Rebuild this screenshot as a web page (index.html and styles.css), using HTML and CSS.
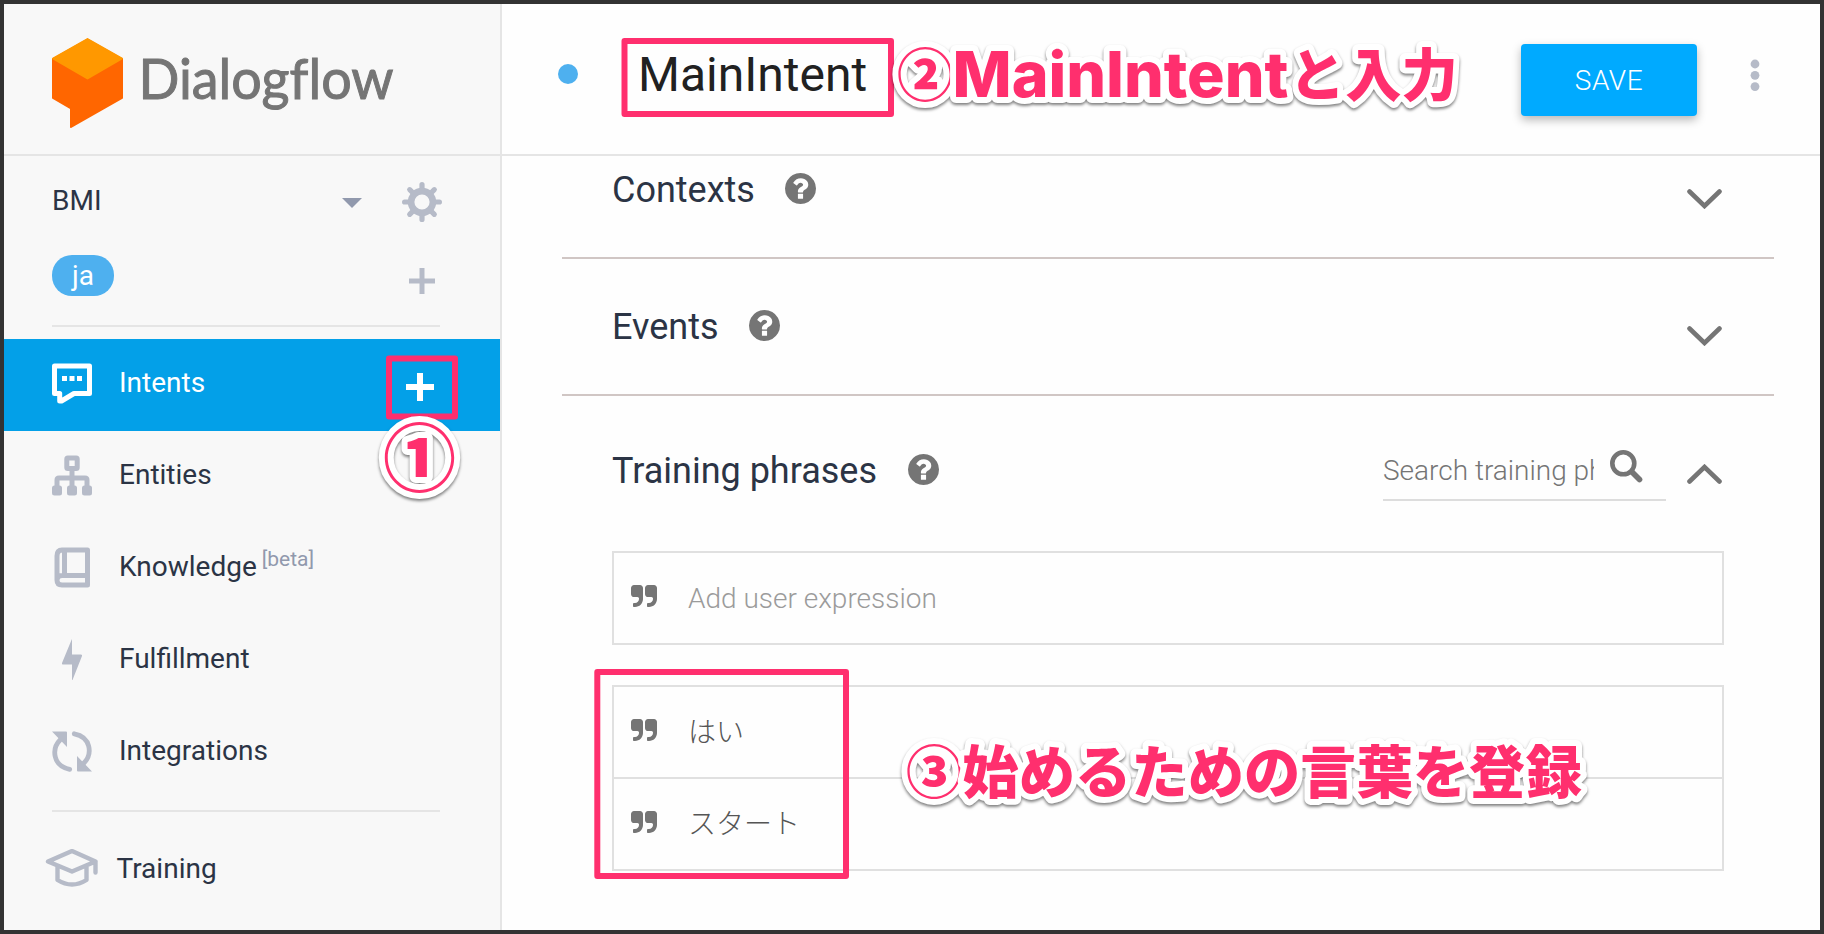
FILE: index.html
```html
<!DOCTYPE html>
<html lang="ja">
<head>
<meta charset="utf-8">
<title>Dialogflow</title>
<link rel="stylesheet" href="styles.css">
</head>
<body>
<svg class="defs" width="0" height="0">
  <symbol id="help" viewBox="128 128 1536 1536"><path d="M1024 1376v-192q0-14-9-23t-23-9h-192q-14 0-23 9t-9 23v192q0 14 9 23t23 9h192q14 0 23-9t9-23zm256-672q0-88-55.5-163t-138.500-116-170-41q-243 0-371 213-15 24 8 42l132 100q7 6 19 6 16 0 25-12 53-68 86-92 34-24 86-24 48 0 85.500 26t37.500 59q0 38-20 61t-68 45q-63 28-115.500 86.500t-52.500 125.500v36q0 14 9 23t23 9h192q14 0 23-9t9-23q0-19 21.500-49.500t54.500-49.500q32-18 49-28.500t46-35 44.500-48 28-60.500 12.500-81zm384 192q0 209-103 385.500t-279.500 279.500-385.500 103-385.500-103-279.500-279.500-103-385.500 103-385.500 279.500-279.500 385.500-103 385.500 103 279.500 279.500 103 385.500z"/></symbol>
  <symbol id="quote" viewBox="0 128 1664 1408"><path d="M768 320v704q0 104-40.500 198.500t-109.500 163.500-163.500 109.500-198.500 40.500h-64q-26 0-45-19t-19-45v-128q0-26 19-45t45-19h64q106 0 181-75t75-181v-32q0-40-28-68t-68-28h-224q-80 0-136-56t-56-136v-384q0-80 56-136t136-56h384q80 0 136 56t56 136zM1664 320v704q0 104-40.500 198.500t-109.500 163.500-163.500 109.500-198.500 40.500h-64q-26 0-45-19t-19-45v-128q0-26 19-45t45-19h64q106 0 181-75t75-181v-32q0-40-28-68t-68-28h-224q-80 0-136-56t-56-136v-384q0-80 56-136t136-56h384q80 0 136 56t56 136z"/></symbol>
  <symbol id="chevron" viewBox="0 0 35 20"><path d="M2.500 2.500L17.500 17L32.500 2.500" fill="none" stroke="currentColor" stroke-width="4.600" stroke-linecap="round"/></symbol>
</svg>
<div class="window">
  <aside class="sidebar">
    <div class="brand">
      <svg width="360" height="110" viewBox="0 0 360 110">
        <path d="M1 21L35.500 1.500L70 21L70 60L19 89L19 70.500L1 60Z" fill="#ff6600" stroke="#ff6600" stroke-width="2" stroke-linejoin="round"/>
        <path d="M1 20.500L35.500 1L70 20.500L35.500 40.500Z" fill="#ff9800" stroke="#ff9800" stroke-width="2" stroke-linejoin="round"/>
        <text class="brand-name" x="86.500" y="61" textLength="255" lengthAdjust="spacingAndGlyphs">Dialogflow</text>
      </svg>
    </div>
    <div class="agent">
      <span class="agent-name">BMI</span>
      <svg class="caret" width="20" height="10" viewBox="0 0 20 10"><path d="M0 0H20L10 10Z"/></svg>
      <svg class="gear" width="40" height="40" viewBox="-20 -20 40 40">
        <g stroke="#b6bbc8" stroke-width="5.200" stroke-linecap="round"><path d="M0-17.400V-11M0 17.400V11M-17.400 0H-11M17.400 0H11M-12.300-12.300L-8-8M12.300-12.300L8-8M-12.300 12.300L-8 8M12.300 12.300L8 8"/></g>
        <circle r="10.900" fill="none" stroke="#b6bbc8" stroke-width="6.600"/>
      </svg>
    </div>
    <div class="language">
      <span class="pill">ja</span>
      <svg width="26" height="26" viewBox="0 0 26 26"><path d="M2.500 13H23.500M13 2.500V23.500" stroke="#b6bbc8" stroke-width="5" stroke-linecap="square"/></svg>
    </div>
    <nav class="menu">
      <a class="item active">
        <svg width="40" height="41" viewBox="0 0 40 41"><path d="M2.500 3V30.500H7.700V38H9.500L22 30.500H37.500V3Z" fill="none" stroke="#fff" stroke-width="5" stroke-linejoin="round"/><path d="M10 13h5v5h-5zM17.500 13h5v5h-5zM25 13h5v5h-5z" fill="#fff"/></svg>
        <span>Intents</span>
        <svg class="add" width="28" height="28" viewBox="0 0 28 28"><path d="M3 14H25M14 3V25" stroke="#fff" stroke-width="6" stroke-linecap="square" stroke-linejoin="round"/></svg>
      </a>
      <a class="item">
        <svg width="40" height="41" viewBox="0 0 40 41"><path d="M20 13V35M5 33V25Q5 23 7 23H33Q35 23 35 25V33" fill="none" stroke="#b6bbc8" stroke-width="5"/><rect x="14.800" y="3" width="10.400" height="10.400" rx="1" fill="none" stroke="#b6bbc8" stroke-width="5" stroke-linejoin="round"/><rect y="30.500" width="10" height="10" rx="2.500"/><rect x="15" y="30.500" width="10" height="10" rx="2.500"/><rect x="30" y="30.500" width="10" height="10" rx="2.500"/></svg>
        <span>Entities</span>
      </a>
      <a class="item">
        <svg width="40" height="41" viewBox="0 0 40 41"><path d="M35.500 3H10Q5 3 5 9V33Q5 38 10 38H35.500ZM12.500 3V28.500M5 33Q5 28.500 10 28.500H35.500" fill="none" stroke="#b6bbc8" stroke-width="5" stroke-linejoin="round"/></svg>
        <span>Knowledge</span><sup>[beta]</sup>
      </a>
      <a class="item">
        <svg width="40" height="41" viewBox="0 0 40 41"><path d="M20 0V15.500H29Q30.500 15.500 30 17L20.500 41H20V25.500H11Q9.500 25.500 10 24L19.500 1Z"/></svg>
        <span>Fulfillment</span>
      </a>
      <a class="item">
        <svg width="40" height="41" viewBox="0 0 40 41"><path d="M8.500 8.500C-1 18 1 35 17.700 38.300M31.500 32.500C41 23 39 6 22.300 2.800" fill="none" stroke="#b6bbc8" stroke-width="4.800" stroke-linecap="round"/><path d="M0 .5H14Q15 .5 15 1.500V16ZM40 40.500H26Q25 40.500 25 39.500V25Z"/></svg>
        <span>Integrations</span>
      </a>
    </nav>
    <a class="item training">
      <svg width="54" height="39" viewBox="0 0 54 39"><path d="M3 12.500L27 2L50.500 12.500L27 22.500ZM12.500 17V31Q27 40 41.500 31V17M50.500 13V23.500" fill="none" stroke="#b6bbc8" stroke-width="4.400" stroke-linejoin="round" stroke-linecap="round"/></svg>
      <span>Training</span>
    </a>
  </aside>
  <main class="main">
    <header class="topbar">
      <i class="status"></i>
      <h1>MainIntent</h1>
      <button class="save">SAVE</button>
      <svg class="more" width="10" height="32" viewBox="0 0 10 32"><circle cx="5" cy="5" r="4.400"/><circle cx="5" cy="16.300" r="4.400"/><circle cx="5" cy="27.600" r="4.400"/></svg>
    </header>
    <section class="section contexts">
      <h2>Contexts</h2><svg class="help"><use href="#help"/></svg>
      <svg class="chevron"><use href="#chevron"/></svg>
    </section>
    <section class="section events">
      <h2>Events</h2><svg class="help"><use href="#help"/></svg>
      <svg class="chevron"><use href="#chevron"/></svg>
    </section>
    <section class="phrases">
      <div class="phrases-head">
        <h2>Training phrases</h2><svg class="help"><use href="#help"/></svg>
        <div class="search">
          <span>Search training phrases</span>
          <svg width="33" height="33" viewBox="0 0 33 33"><circle cx="13.300" cy="13.300" r="11" fill="none" stroke="#757575" stroke-width="4.600"/><path d="M22 22L29.500 29.500" stroke="#757575" stroke-width="5.600" stroke-linecap="round"/></svg>
        </div>
        <svg class="chevron up"><use href="#chevron"/></svg>
      </div>
      <div class="box"><div class="row hint"><svg class="quote"><use href="#quote"/></svg><span>Add user expression</span></div></div>
      <div class="box list">
        <div class="row"><svg class="quote"><use href="#quote"/></svg><span class="jp">はい</span></div>
        <div class="row"><svg class="quote"><use href="#quote"/></svg><span class="jp">スタート</span></div>
      </div>
    </section>
  </main>
  <svg class="notes" width="1824" height="934" viewBox="0 0 1824 934">
    <g fill="none" stroke="#ff2f6e" stroke-width="6" stroke-linejoin="round">
      <rect x="624.500" y="41" width="266.500" height="73"/>
      <rect x="389" y="358.500" width="66" height="58"/>
      <rect x="597.300" y="672" width="248.700" height="204"/>
    </g>
    <g class="note">
      <text class="one" x="383" y="485">①</text>
      <text x="897" y="95.500">②</text>
      <text x="952.500" y="97" class="latin" textLength="336" lengthAdjust="spacingAndGlyphs">MainIntent</text>
      <text x="1289" y="95.500">と入力</text>
      <text x="906" y="792.500" textLength="676" lengthAdjust="spacing">③始めるための言葉を登録</text>
    </g>
  </svg>
</div>
</body>
</html>
```
FILE: styles.css
```css
* { box-sizing: border-box; }
body { margin: 0; font-family: Roboto, "Noto Sans CJK JP", sans-serif; font-size: 28px; color: #2b3445; }
.defs { position: absolute; }
.window { position: relative; display: flex; width: 1824px; height: 934px; border: 4px solid #333; background: #fefefe; overflow: hidden; }
svg { flex: none; display: block; }

.sidebar { width: 498px; background: #f8f8f8; border-right: 2px solid #e5e5e5; }
.brand { height: 152px; padding: 34px 0 0 48px; border-bottom: 2px solid #e5e5e5; }
.brand-name { font-family: Lato, sans-serif; font-size: 56px; font-variant-ligatures: none; fill: #757575; stroke: #757575; stroke-width: 1px; }
.agent { display: flex; align-items: center; height: 92px; padding: 0 58px 0 48px; }
.agent-name { flex: 1; padding-bottom: 4px; }
.caret { fill: #9199ad; margin: 2px 40px 0 0; }
.gear { margin-top: 0; }
.language { display: flex; justify-content: space-between; align-items: flex-start; height: 79px; margin: 0 60px 12px 48px; padding: 7px 5px 0 0; border-bottom: 2px solid #e5e5e5; }
.pill { width: 62px; height: 41px; border-radius: 20px; background: #4eb0ef; color: #fff; line-height: 41px; text-align: center; }
.language svg { margin-top: 13px; }
.item { display: flex; align-items: center; height: 92px; padding: 0 0 3px 48px; }
.item svg { fill: #b6bbc8; margin-right: 27px; }
.item span { padding-bottom: 3px; }
.item sup { margin: -17px 0 0 5px; font-size: 21px; line-height: 26px; color: #9199ad; }
.active { background: #03a0e8; color: #fff; }
.active .add { margin: 6px 66px 0 auto; }
.menu::after { content: ""; display: block; height: 2px; margin: 11px 60px 13px 48px; background: #e5e5e5; }
.training { padding-left: 41px; }
.training svg { margin-right: 17.500px; margin-top: -2px; }

.main { flex: 1; }
.topbar { display: flex; align-items: center; height: 152px; padding: 0 60px 0 56px; border-bottom: 2px solid #e5e5e5; }
.status { width: 20px; height: 20px; margin-top: -10px; border-radius: 50%; background: #4eb0ef; }
h1, h2 { margin: 0; font-weight: 400; }
h1 { margin: -10px auto 0 60px; font-size: 48px; color: #212121; }
.save { width: 176px; height: 72px; margin: 2px 53px 0 0; border: 0; border-radius: 4px; background: #00aaff; color: #fff; font: 300 28px Roboto, sans-serif; letter-spacing: .6px; box-shadow: 0 4px 10px rgba(0, 0, 0, .28); }
.more { fill: #b6bbc8; margin-top: -9px; }
h2 { font-size: 36px; line-height: 42px; }
.section { display: flex; align-items: flex-start; margin: 0 46px 0 60px; padding: 47px 52px 0 50px; height: 137px; border-bottom: 2px solid #d0c6c4; }
.contexts { height: 103px; padding-top: 13px; }
.help { width: 31px; height: 31px; margin: 4px 0 0 30.500px; fill: #757575; }
.chevron { width: 35px; height: 20px; margin: 20px 0 0 auto; color: #757575; }
.phrases { padding: 54px 96px 0 110px; }
.phrases-head { display: flex; align-items: flex-start; height: 101px; padding-right: 2px; }
.search { display: flex; width: 283px; height: 51px; margin-left: auto; border-bottom: 2px solid #ddd; font-weight: 300; color: #757575; }
.search span { width: 211px; overflow: hidden; white-space: nowrap; line-height: 41px; margin: 0 16px 0 0; }
.up { margin: 14px 0 0 21px; transform: scaleY(-1); }
.box { margin-bottom: 40px; border: 2px solid #e0e0e0; }
.row { display: flex; align-items: center; height: 90px; padding-left: 17px; }
.row + .row { height: 92px; border-top: 2px solid #e0e0e0; }
.quote { width: 26px; height: 22px; margin: -4px 31px 0 0; fill: #757575; }
.hint span { font-weight: 300; color: #9b9b9b; padding-top: 1px; }
.jp { font-weight: 300; color: #555; font-family: "Noto Sans CJK JP", sans-serif; padding-bottom: 5px; }

.notes { position: absolute; left: -4px; top: -4px; }
.note { filter: drop-shadow(0 2px 1.500px rgba(0, 0, 0, .5)); }
.note text { font-family: "Noto Sans CJK JP", sans-serif; font-size: 56.300px; font-weight: 900; fill: #ff2f6e; stroke: #fff; stroke-width: 12px; stroke-linejoin: round; paint-order: stroke; }
.note .one { font-size: 73px; }
.note .latin { font-family: Inter, sans-serif; font-size: 63px; font-weight: 800; }
```
